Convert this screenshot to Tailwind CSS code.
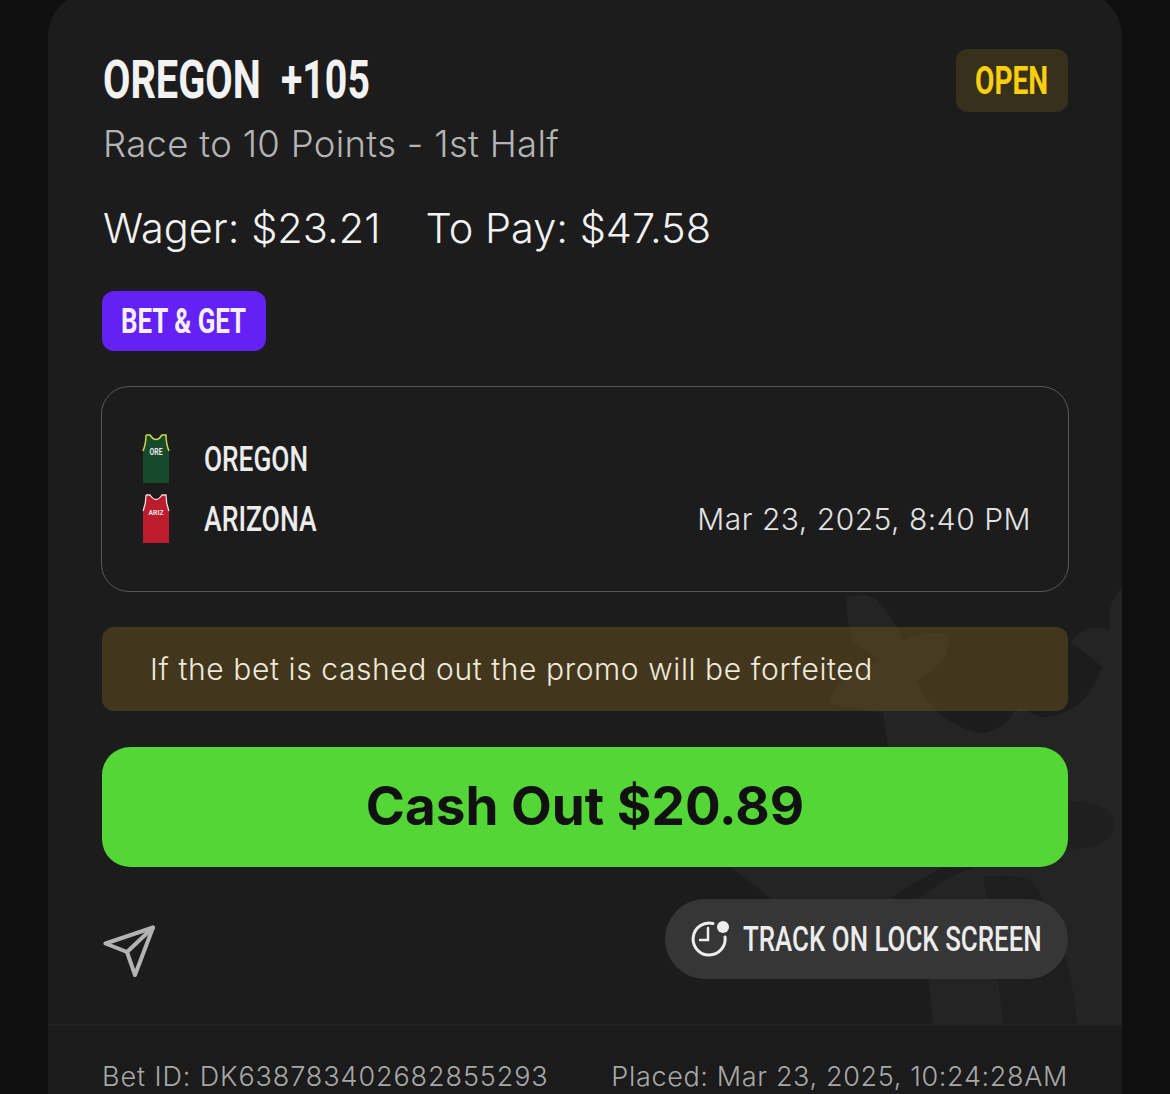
<!DOCTYPE html>
<html lang="en">
  <head>
    <meta charset="UTF-8" />
    <meta name="viewport" content="width=device-width, initial-scale=1.0" />
    <title>Bet Detail</title>
    <script src="https://cdn.jsdelivr.net/npm/@tailwindcss/browser@4"></script>
  </head>
  <body class="h-[1094px] overflow-hidden bg-[#0f0f0f] font-['Inter',sans-serif]">
    <div class="relative mx-[48px] -mt-[8px] h-[1102px] overflow-hidden rounded-t-[44px] bg-[#1c1c1c]">
      <!-- watermark, page coordinates shifted by the card offset -->
      <svg class="absolute left-[-48px] top-[8px] h-[1094px] w-[1170px]" viewBox="0 0 1170 1094" fill="none">
        <path d="M847 597 Q865 592 877 600 Q892 615 903 640 Q920 632 933 633 Q948 633 950 638 Q948 655 940 663 Q930 675 917 680 Q922 695 933 707 Q955 730 983 733 Q1005 728 1013 713 L1020 705 Q1032 716 1043 717 Q1065 716 1080 703 Q1095 688 1102 667 Q1085 652 1070 643 Q1080 630 1093 627 L1110 630 Q1105 605 1122 587 L1122 1024 L933 1024 L920 900 L800 950 L773 900 L730 867 L700 860 L888 747 L883 713 L850 707 Q835 706 828 700 Q835 688 843 680 L880 660 Q862 650 853 643 Q845 620 847 597Z" fill="#242424" />
        <path d="M887 900 L940 868 L973 867 Q940 880 917 900Z" fill="#1d1d1d" />
        <path d="M983 877 Q1020 872 1033 883 Q1070 940 1077 1024 L1003 1024 Q995 940 983 877Z" fill="#1e1e1e" />
        <path d="M1050 802 Q1100 798 1112 815 Q1116 830 1108 838 Q1098 850 1050 850Z" fill="#1f1f1f" />
      </svg>

      <div class="relative flex h-[1032px] flex-col px-[54px] pt-[57px]">
        <div class="flex h-[63px] items-start justify-between">
          <div class="flex h-[48px] items-center pt-[14px] pl-px text-[#f2f2f2]">
            <span class="w-[178px] origin-left scale-x-[0.75] font-['Roboto',sans-serif] text-[53px] leading-none font-bold whitespace-nowrap">OREGON</span>
            <span class="origin-left scale-x-[0.74] font-['Roboto',sans-serif] text-[53px] leading-none font-bold whitespace-nowrap">+105</span>
          </div>
          <div class="flex h-[63px] w-[112px] items-center rounded-[12px] bg-[#37311c] pl-[19px]">
            <span class="origin-left scale-x-[0.74] font-['Roboto',sans-serif] text-[38px] leading-none font-bold text-[#fbcf0c]">OPEN</span>
          </div>
        </div>
        <p class="mt-[12px] pl-px text-[36.5px] leading-[40px] font-light tracking-[0.3px] whitespace-nowrap text-[#b4b4b4]">Race to 10 Points - 1st Half</p>
        <div class="mt-[41px] flex gap-[45px] pl-[1px] text-[41.5px] leading-[46px] font-light whitespace-nowrap text-[#f2f2f2]">
          <span>Wager: $23.21</span>
          <span>To Pay: $47.58</span>
        </div>
        <div class="mt-[40px] flex h-[60px] w-[164px] items-center rounded-[12px] bg-[#6321f5] pl-[19px]">
          <span class="origin-left scale-x-[0.74] font-['Roboto',sans-serif] text-[35px] leading-none font-bold whitespace-nowrap text-[#f5f0ff]">BET &amp; GET</span>
        </div>

        <div class="mt-[35px] flex h-[206px] w-[968px] -translate-x-px flex-col justify-center gap-[10px] rounded-[28px] border border-[#595959] pr-[37px] pl-[38px]">
          <div class="flex h-[50px] items-center">
            <svg class="h-[50px] w-[32px] shrink-0" viewBox="0 0 32 50">
              <path d="M6 1 L10 1 Q16 10 22 1 L26 1 Q26 10 29 17 L29 49 L3 49 L3 17 Q6 10 6 1Z" fill="#17492b" />
              <path d="M6 1 L10 1 Q16 10 22 1 L26 1 Q26 10 29 17 M6 1 Q6 10 3 17" fill="none" stroke="#c9d84a" stroke-width="1.5" />
              <text x="16" y="21" text-anchor="middle" font-family="Roboto" font-size="9" font-weight="700" textLength="13" lengthAdjust="spacingAndGlyphs" fill="#e8e8e8">ORE</text>
            </svg>
            <span class="ml-[32px] origin-left scale-x-[0.75] font-['Roboto',sans-serif] text-[35px] leading-none font-medium text-[#ececec]">OREGON</span>
          </div>
          <div class="flex h-[50px] items-center justify-between">
            <div class="flex items-center">
              <svg class="h-[50px] w-[32px] shrink-0" viewBox="0 0 32 50">
                <path d="M6 1 L10 1 Q16 10 22 1 L26 1 Q26 10 29 17 L29 49 L3 49 L3 17 Q6 10 6 1Z" fill="#bd1c2d" />
                <path d="M6 1 L10 1 Q16 10 22 1 L26 1 Q26 10 29 17 M6 1 Q6 10 3 17" fill="none" stroke="#e9dfe3" stroke-width="1.3" />
                <text x="16" y="21" text-anchor="middle" font-family="Roboto" font-size="8" font-weight="700" textLength="15" lengthAdjust="spacingAndGlyphs" fill="#f0e6e6">ARIZ</text>
              </svg>
              <span class="ml-[32px] origin-left scale-x-[0.76] font-['Roboto',sans-serif] text-[35px] leading-none font-medium text-[#ececec]">ARIZONA</span>
            </div>
            <span class="text-[30px] font-light tracking-[0.5px] text-[#e2e2e2]">Mar 23, 2025, 8:40 PM</span>
          </div>
        </div>

        <div class="mt-[35px] flex h-[84px] items-center rounded-[12px] bg-[#8a6a1c]/35 pl-[48px] text-[30px] font-light tracking-[0.6px] whitespace-nowrap text-[#efe9dc]">If the bet is cashed out the promo will be forfeited</div>

        <div class="mt-[36px] flex h-[120px] items-center justify-center rounded-[28px] bg-[#53d636] text-[53px] font-bold text-[#111111]">Cash Out $20.89</div>

        <div class="mt-[32px] flex items-start justify-between">
          <svg class="mt-[26px] ml-[1px] h-[52px] w-[52px]" viewBox="0 0 52 52" fill="none" stroke="#b3b3b3" stroke-width="4" stroke-linejoin="round" stroke-linecap="round">
            <path d="M50 2.5 L2.5 18.5 L24 27 L32 50 Z" />
            <path d="M50 2.5 L24 27" />
          </svg>
          <div class="flex h-[80px] w-[403px] items-center rounded-full bg-[#363636] pl-[26px]">
            <svg class="h-[40px] w-[40px] shrink-0" viewBox="0 0 40 40" fill="none" stroke="#eeeeee" stroke-width="3" stroke-linecap="round">
              <path d="M22 4.5 A16 16 0 1 0 34 18" />
              <path d="M17 9 L17 21 L9 21" stroke-width="2.5" />
              <circle cx="32" cy="8" r="6" fill="#eeeeee" stroke="none" />
            </svg>
            <span class="ml-[12px] shrink-0 origin-left scale-x-[0.74] font-['Roboto',sans-serif] text-[35px] leading-none font-medium whitespace-nowrap text-[#ececec]">TRACK ON LOCK SCREEN</span>
          </div>
        </div>
      </div>

      <div class="relative flex h-[70px] justify-between border-t-2 border-[#232323] bg-[#1b1b1b] px-[54px] pt-[33px] text-[27px] leading-[36px] font-light whitespace-nowrap text-[#a8a8a8]">
        <span class="tracking-[0.9px]">Bet ID: DK638783402682855293</span>
        <span class="tracking-[0.65px]">Placed: Mar 23, 2025, 10:24:28AM</span>
      </div>
    </div>
  </body>
</html>
